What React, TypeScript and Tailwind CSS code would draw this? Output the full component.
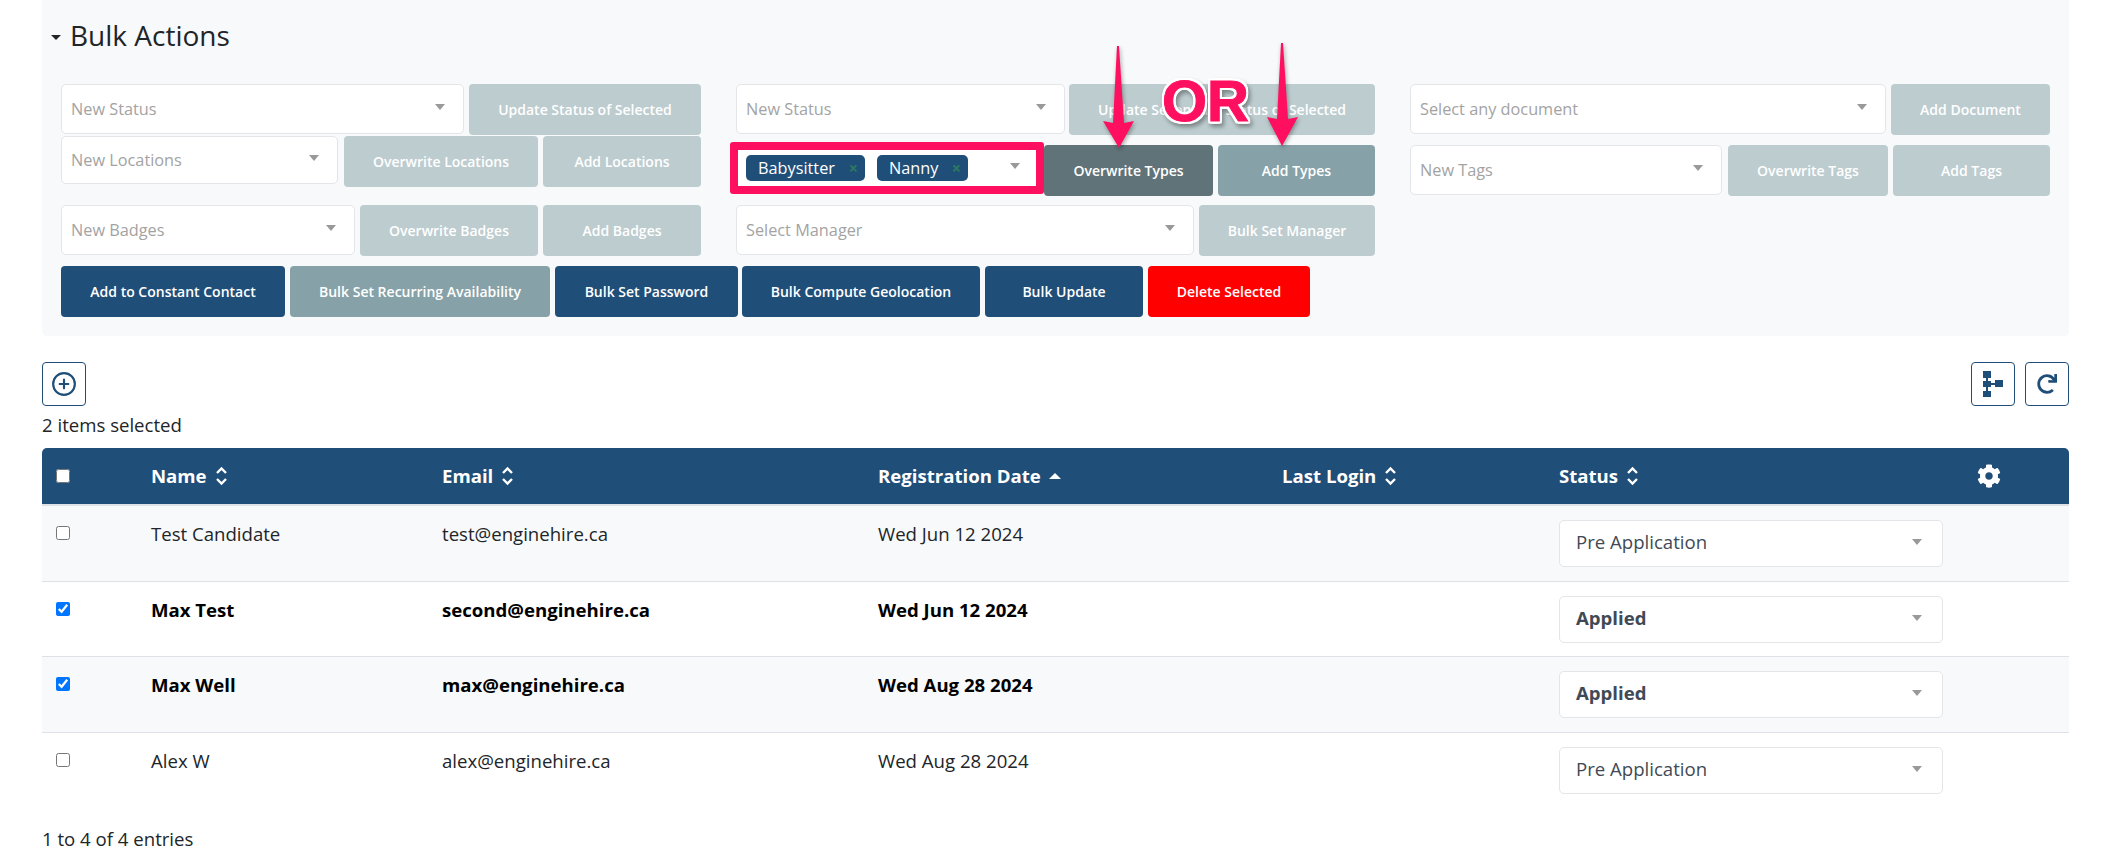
import { FaCog, FaRedo } from "react-icons/fa";
import { CirclePlus } from "lucide-react";

const Caret = () => (
  <span className="block w-0 h-0 border-x-[5px] border-t-[6px] border-x-transparent border-t-[#999] -mt-1" />
);

const Select = ({
  width,
  height = "h-[50px]",
  label,
}: {
  width: string;
  height?: string;
  label: string;
}) => (
  <div
    className={`${width} ${height} shrink-0 flex items-center justify-between pl-[9px] pr-[18px] bg-white border border-[#e3e5e8] rounded-[5px] text-[16.3px] text-[#a3a3a3]`}
  >
    <span>{label}</span>
    <Caret />
  </div>
);

const ActionButton = ({
  width,
  color = "bg-[#bdcccf]",
  height = "h-[51px]",
  label,
  textColor = "text-white",
}: {
  width: string;
  color?: string;
  height?: string;
  label: string;
  textColor?: string;
}) => (
  <button
    type="button"
    className={`${width} ${height} ${color} ${textColor} shrink-0 rounded-[4px] text-sm font-semibold`}
  >
    {label}
  </button>
);

const SortIcon = () => (
  <svg width="13" height="22" viewBox="0 0 13 22" className="shrink-0">
    <path
      d="M2 8l4.5-4.5L11 8M2 14l4.5 4.5L11 14"
      fill="none"
      stroke="#fff"
      strokeWidth="2.4"
    />
  </svg>
);

const columns = "grid grid-cols-[109px_291px_436px_404px_277px_418px_1fr]";

const rows = [
  {
    name: "Test Candidate",
    email: "test@enginehire.ca",
    date: "Wed Jun 12 2024",
    status: "Pre Application",
    selected: false,
    height: "h-[76px] border-b border-[#dee2e6] bg-[#f8f9fa]",
  },
  {
    name: "Max Test",
    email: "second@enginehire.ca",
    date: "Wed Jun 12 2024",
    status: "Applied",
    selected: true,
    height: "h-[75px] border-b border-[#dee2e6] bg-white",
  },
  {
    name: "Max Well",
    email: "max@enginehire.ca",
    date: "Wed Aug 28 2024",
    status: "Applied",
    selected: true,
    height: "h-[76px] border-b border-[#dee2e6] bg-[#f8f9fa]",
  },
  {
    name: "Alex W",
    email: "alex@enginehire.ca",
    date: "Wed Aug 28 2024",
    status: "Pre Application",
    selected: false,
    height: "h-[75px] bg-white",
  },
];

const Chip = ({ label, width }: { label: string; width: string }) => (
  <span
    className={`${width} h-[26px] flex items-center justify-between pl-3 pr-[7px] bg-[#1f4e79] rounded-[5px] text-[16.3px] text-white`}
  >
    {label}
    <span className="text-base font-bold leading-none text-[#2c7a5e]">×</span>
  </span>
);

export default function App() {
  return (
    <div className="relative h-[859px] w-[2115px] overflow-hidden bg-white font-['Open_Sans',sans-serif] text-[18.6px] text-[#212529]">
      <div className="ml-[42px] w-[2027px] h-[336px] bg-[#f8f9fa] rounded-b-[5px]">
        <div className="flex items-center h-[70px] pl-[9px]">
          <span className="w-0 h-0 mt-1 border-x-[5px] border-t-[5px] border-x-transparent border-t-[#212529]" />
          <h2 className="ml-[9px] text-[28px] text-[#212529]">Bulk Actions</h2>
        </div>

        <div className="flex gap-[35px] pl-[19px] pt-[14px]">
          <div className="w-[640px]">
            <div className="flex justify-between">
              <Select width="w-[403px]" label="New Status" />
              <ActionButton width="w-[232px]" label="Update Status of Selected" />
            </div>
            <div className="flex justify-between mt-px">
              <Select width="w-[277px]" height="h-[48px]" label="New Locations" />
              <ActionButton width="w-[194px] ml-[6px]" label="Overwrite Locations" />
              <ActionButton width="w-[158px] ml-[5px]" label="Add Locations" />
            </div>
            <div className="flex justify-between mt-[18px]">
              <Select width="w-[294px]" label="New Badges" />
              <ActionButton width="w-[178px] ml-[5px]" label="Overwrite Badges" />
              <ActionButton width="w-[158px] ml-[5px]" label="Add Badges" />
            </div>
          </div>

          <div className="w-[639px]">
            <div className="flex justify-between">
              <Select width="w-[329px]" label="New Status" />
              <ActionButton width="w-[306px]" label="Update Secondary Status of Selected" />
            </div>
            <div className="flex h-[52px] mt-[7px] -ml-[6px]">
              <div className="w-[314px] h-[52px] shrink-0 flex items-center gap-3 pl-2 border-[8px] border-[#ff0f5f] bg-white rounded-[3px]">
                <Chip label="Babysitter" width="w-[119px]" />
                <Chip label="Nanny" width="w-[91px]" />
                <span className="ml-[30px]">
                  <Caret />
                </span>
              </div>
              <div className="flex gap-[5px] pt-[3px]">
                <ActionButton width="w-[169px]" color="bg-[#5f7378]" label="Overwrite Types" />
                <ActionButton width="w-[157px]" color="bg-[#86a2a8]" label="Add Types" />
              </div>
            </div>
            <div className="flex justify-between mt-[11px]">
              <Select width="w-[458px]" label="Select Manager" />
              <ActionButton width="w-[176px]" label="Bulk Set Manager" />
            </div>
          </div>

          <div className="w-[640px]">
            <div className="flex justify-between">
              <Select width="w-[476px]" label="Select any document" />
              <ActionButton width="w-[159px]" label="Add Document" />
            </div>
            <div className="flex justify-between mt-[10px]">
              <Select width="w-[312px]" label="New Tags" />
              <ActionButton width="w-[160px] ml-[6px]" label="Overwrite Tags" />
              <ActionButton width="w-[157px] ml-[5px]" label="Add Tags" />
            </div>
          </div>
        </div>

        <div className="flex gap-[5px] pl-[19px] mt-[10px]">
          <ActionButton width="w-[224px]" color="bg-[#1f4e79]" label="Add to Constant Contact" />
          <ActionButton width="w-[260px]" color="bg-[#86a2a8]" label="Bulk Set Recurring Availability" />
          <ActionButton width="w-[183px] -mr-px" color="bg-[#1f4e79]" label="Bulk Set Password" />
          <ActionButton width="w-[238px]" color="bg-[#1f4e79]" label="Bulk Compute Geolocation" />
          <ActionButton width="w-[158px]" color="bg-[#1f4e79]" label="Bulk Update" />
          <ActionButton width="w-[162px]" color="bg-[#ff0000]" label="Delete Selected" />
        </div>
      </div>

      <div className="ml-[42px] w-[2027px] mt-[26px]">
        <div className="flex justify-between">
          <button
            type="button"
            className="w-11 h-11 flex items-center justify-center border border-[#1f4e79] rounded-[4px] text-[#1f4e79]"
          >
            <CirclePlus size={26} strokeWidth={2} />
          </button>
          <div className="flex gap-[10px]">
            <button
              type="button"
              className="w-11 h-11 flex items-center justify-center border border-[#1f4e79] rounded-[4px]"
            >
              <svg width="20" height="26" viewBox="0 0 20 26" fill="#1f4e79">
                <path d="M0 0h8v7H0zM0 20h8v6H0zM0 10h8v6H0zM12 9h8v7h-8zM3 7h2v13H3zM8 12h4v2H8z" />
              </svg>
            </button>
            <button
              type="button"
              className="w-11 h-11 flex items-center justify-center border border-[#1f4e79] rounded-[4px] text-[#1f4e79]"
            >
              <FaRedo size={20} />
            </button>
          </div>
        </div>

        <p className="mt-[5px] leading-[27px]">2 items selected</p>

        <div className="mt-[10px]">
          <div className={`${columns} h-[58px] items-center bg-[#1f4e79] border-b-2 border-[#dee2e6] rounded-t-[5px] font-bold text-white`}>
            <div className="pl-[14px] flex">
              <input type="checkbox" readOnly className="w-[14px] h-[14px] -mt-px" />
            </div>
            <div className="flex items-center gap-2">
              Name <SortIcon />
            </div>
            <div className="flex items-center gap-2">
              Email <SortIcon />
            </div>
            <div className="flex items-center gap-2">
              Registration Date
              <span className="w-0 h-0 border-x-[6px] border-b-[6px] border-x-transparent border-b-white" />
            </div>
            <div className="flex items-center gap-2">
              Last Login <SortIcon />
            </div>
            <div className="flex items-center gap-2">
              Status <SortIcon />
            </div>
            <div>
              <FaCog size={24} />
            </div>
          </div>

          {rows.map((row) => (
            <div
              key={row.email}
              className={`${columns} ${row.height} ${row.selected ? "font-bold text-black" : ""}`}
            >
              <div className="pl-[14px] pt-[20px]">
                <input
                  type="checkbox"
                  checked={row.selected}
                  readOnly
                  className="block w-[14px] h-[14px]"
                />
              </div>
              <div className="pt-[14px] leading-[27px]">{row.name}</div>
              <div className="pt-[14px] leading-[27px]">{row.email}</div>
              <div className="pt-[14px] leading-[27px]">{row.date}</div>
              <div />
              <div className="pt-[14px]">
                <div className="w-[384px] h-[47px] flex items-center justify-between pl-[16px] pr-[20px] bg-white border border-[#e3e5e8] rounded-[5px] text-[#3f4a56]">
                  <span className="-mt-[4px]">{row.status}</span>
                  <Caret />
                </div>
              </div>
              <div />
            </div>
          ))}
        </div>

        <p className="mt-[17px] leading-[27px]">1 to 4 of 4 entries</p>
      </div>

      {/* annotation drawn over the screenshot */}
      <svg
        width="2115"
        height="200"
        className="absolute left-0 top-0 pointer-events-none drop-shadow-[1px_2px_2px_rgba(0,0,0,0.35)]"
      >
        <path d="M1117 46h2l5 77 10-2-15 27-16-27 10 2z" fill="#ff0f5f" />
        <path d="M1281 43h2l5 76 10-2-16 29-15-29 10 2z" fill="#ff0f5f" />
      </svg>
      <span className="absolute left-[1162px] top-[69px] text-[58px] leading-[64px] font-bold font-['Liberation_Sans',sans-serif] text-[#ff0f5f] [-webkit-text-stroke:1px_#ff0f5f] [filter:drop-shadow(2px_0_0_white)_drop-shadow(-2px_0_0_white)_drop-shadow(0_2px_0_white)_drop-shadow(0_-2px_0_white)_drop-shadow(2px_3px_2px_rgba(0,0,0,0.35))]">
        OR
      </span>
    </div>
  );
}
